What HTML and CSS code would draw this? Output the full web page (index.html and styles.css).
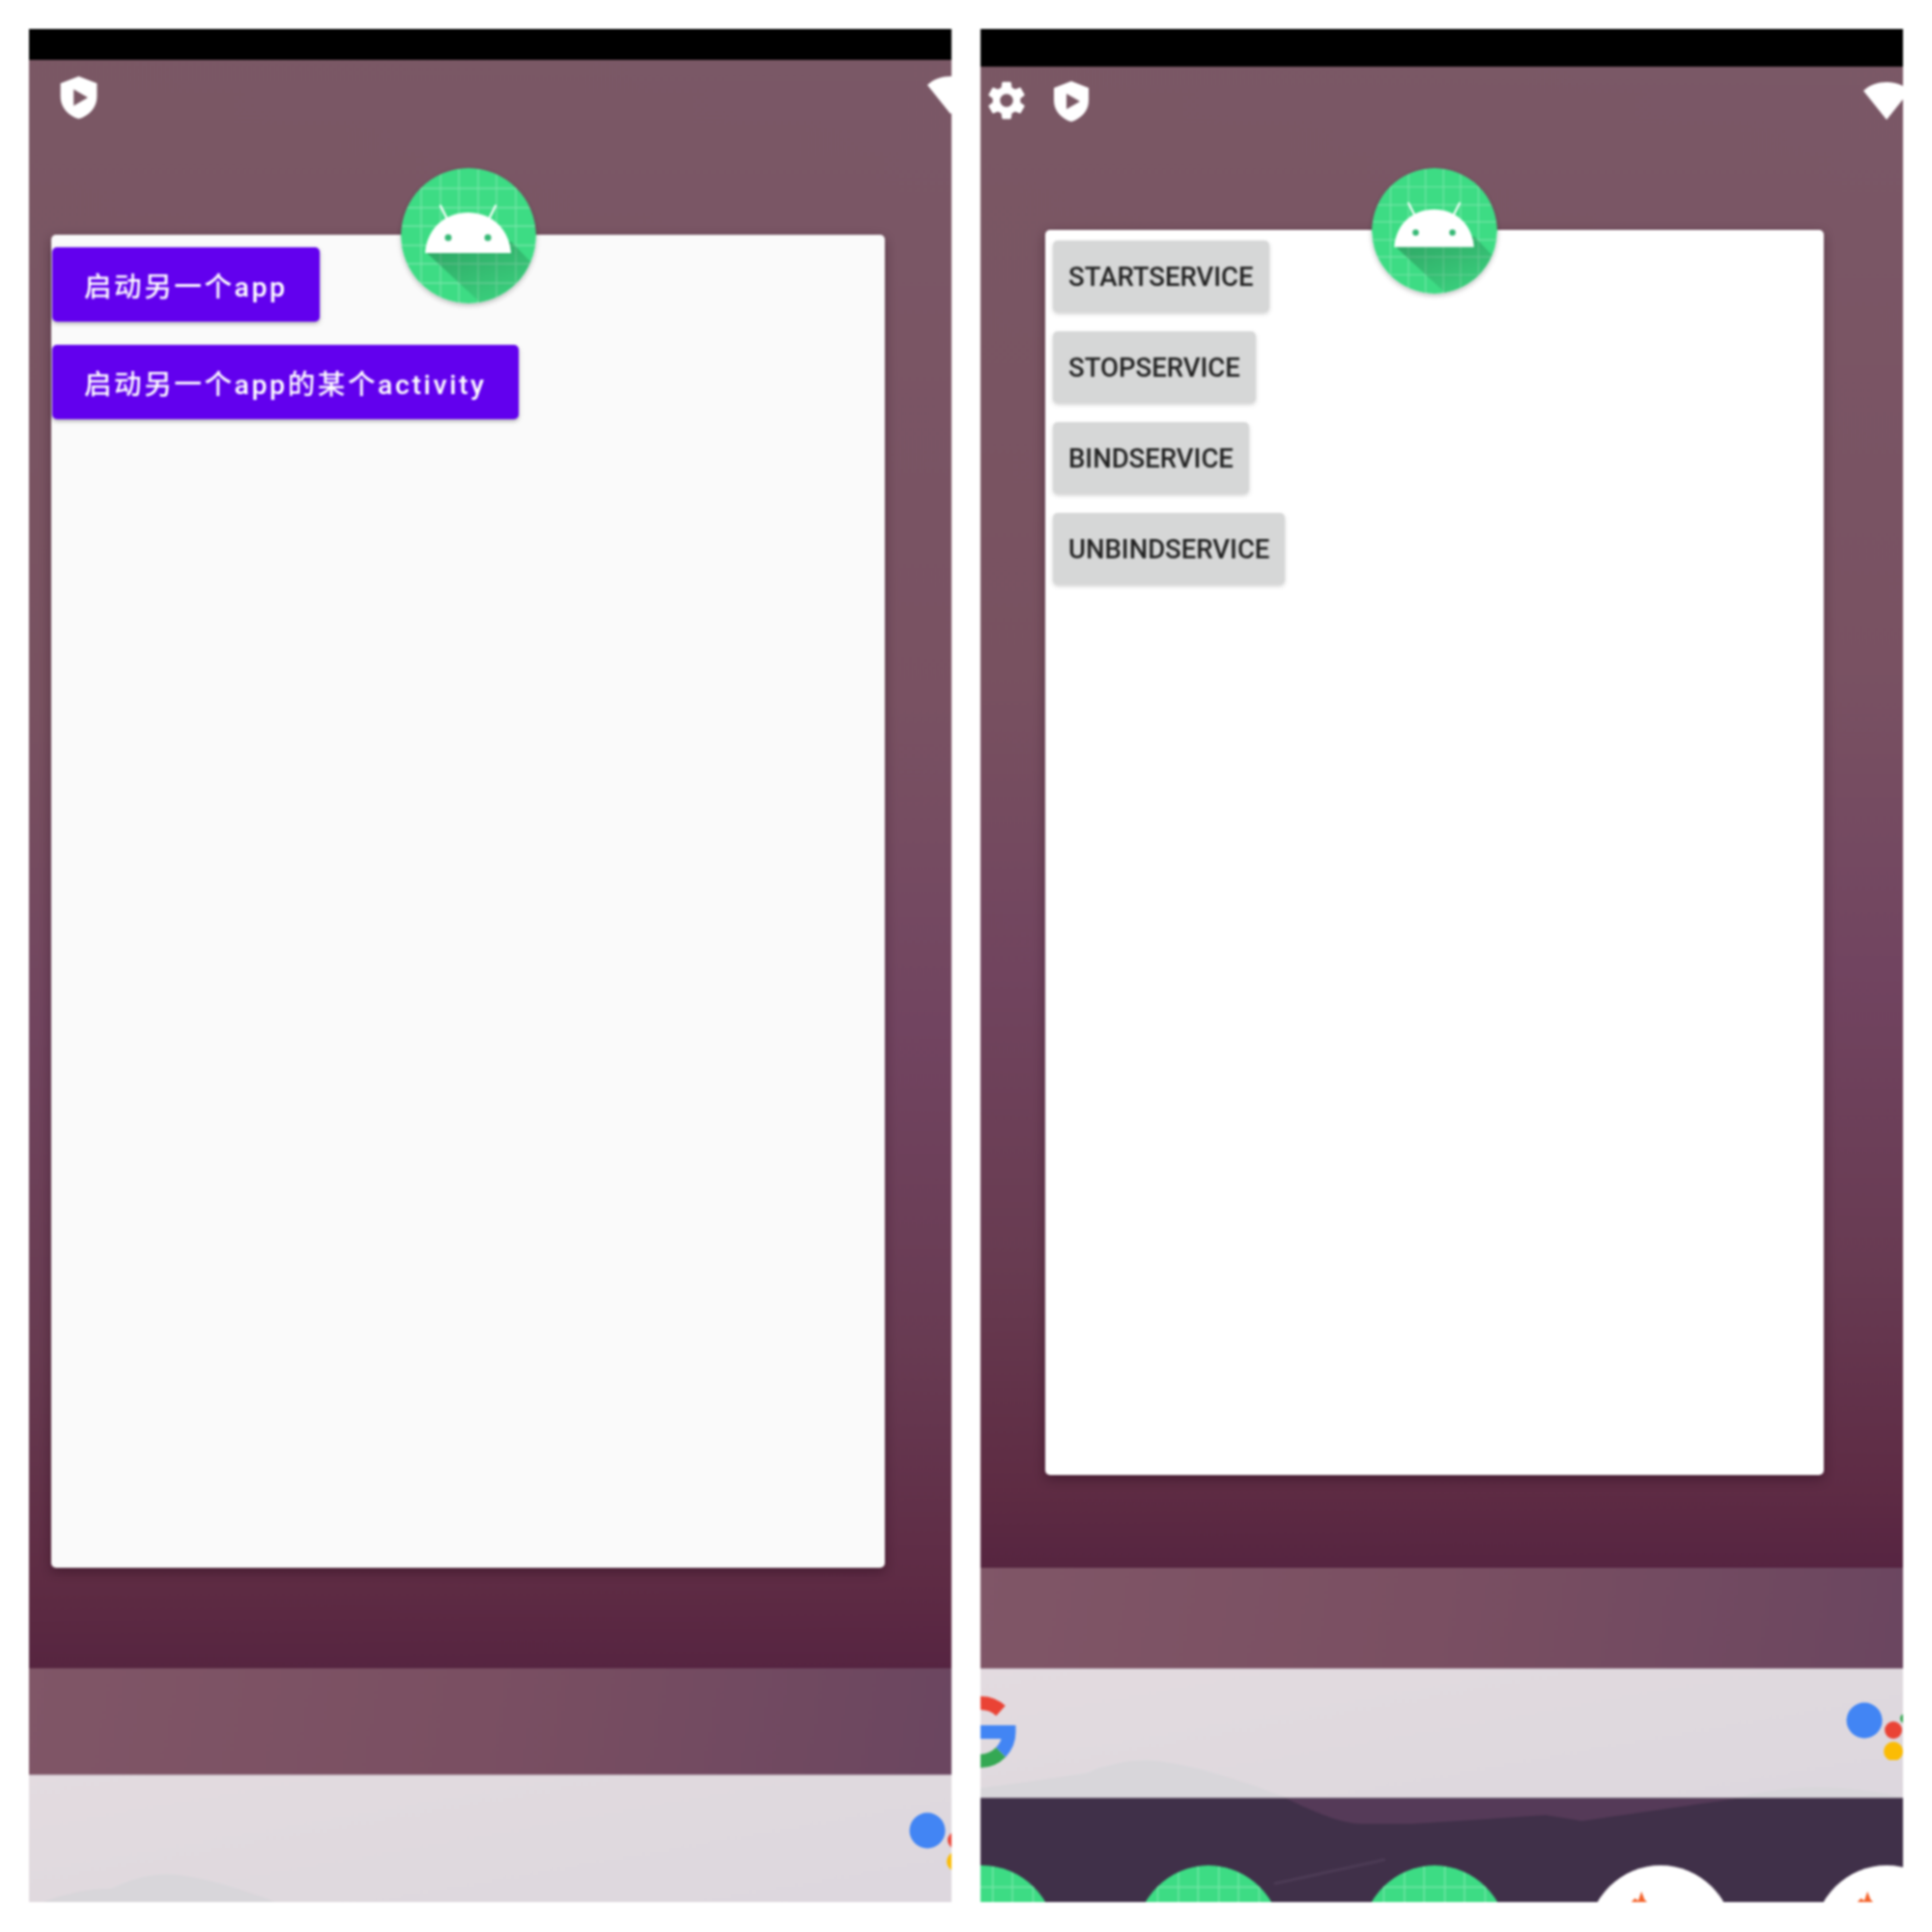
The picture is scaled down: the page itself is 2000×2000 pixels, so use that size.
FILE: index.html
```html
<!DOCTYPE html>
<html lang="zh">
<head>
<meta charset="utf-8">
<title>Android apps</title>
<link rel="stylesheet" href="styles.css">
</head>
<body>
<svg class="defs" aria-hidden="true">
  <defs>
    <clipPath id="disc"><circle cx="70" cy="70" r="70"/></clipPath>
    <linearGradient id="fall" x1="0.2" y1="0" x2="0.8" y2="1">
      <stop offset="0" stop-color="#1c5c3a" stop-opacity=".42"/>
      <stop offset="1" stop-color="#1c5c3a" stop-opacity=".06"/>
    </linearGradient>
    <symbol id="android" viewBox="0 0 140 140">
      <g clip-path="url(#disc)">
        <rect width="140" height="140" fill="#3ddc84"/>
        <path class="grid" d="M21 0V140M41 0V140M60 0V140M80 0V140M99 0V140M119 0V140M0 21H140M0 41H140M0 60H140M0 80H140M0 99H140M0 119H140"/>
        <path d="M27 88L114 76L141 104V141H84Z" fill="url(#fall)"/>
        <path d="M41 39L49 55M98 39L90 55" class="antenna"/>
        <path d="M25 88C27 62 46 46 69.500 46C93 46 112 62 114 88Z" fill="#fff"/>
        <circle cx="49" cy="72" r="3.500" fill="#35b874"/>
        <circle cx="90" cy="72" r="3.500" fill="#35b874"/>
      </g>
    </symbol>
    <symbol id="shield" viewBox="0 0 36 42">
      <path fill-rule="evenodd" d="M18 0L36 7V20C36 31 28 39 18 42C8 39 0 31 0 20V7ZM13 13V29L27 21Z" fill="#fff"/>
    </symbol>
    <symbol id="wifi" viewBox="0 0 48 40">
      <path d="M24 39L0 9C6 3 15 0 24 0C33 0 42 3 48 9Z" fill="#fff"/>
    </symbol>
    <symbol id="dots" viewBox="0 0 64 60">
      <circle cx="19" cy="19" r="18.500" fill="#4285f4"/>
      <circle cx="49" cy="29" r="9" fill="#ea4335"/>
      <circle cx="49" cy="51" r="10" fill="#fbbc04"/>
      <circle cx="61" cy="17" r="5" fill="#34a853"/>
    </symbol>
  </defs>
</svg>

<main class="screens">
  <section class="phone phone-a">
    <div class="status"></div>
    <div class="wall">
      <div class="tray tray-a">
        <svg class="shield"><use href="#shield"/></svg>
        <svg class="wifi wifi-a"><use href="#wifi"/></svg>
      </div>
      <div class="card card-a">
        <svg class="badge badge-a"><use href="#android"/></svg>
        <button class="btn btn-primary">启动另一个app</button>
        <button class="btn btn-primary">启动另一个app的某个activity</button>
      </div>
    </div>
    <div class="band band-a"></div>
    <div class="search search-a">
      <svg class="hills" viewBox="0 0 955 132" preserveAspectRatio="none">
        <path d="M15 132Q50 118 85 118Q115 103 142 103Q180 103 255 132Z"/>
      </svg>
      <svg class="dots dots-a"><use href="#dots"/></svg>
    </div>
  </section>

  <section class="phone phone-b">
    <div class="status status-b"></div>
    <div class="wall">
      <div class="tray tray-b">
        <svg class="gear" viewBox="0 0 24 24"><path fill="#fff" fill-rule="evenodd" d="M19.430 12.980c.040-.320.070-.640.070-.980s-.030-.660-.070-.980l2.110-1.650c.190-.150.240-.420.120-.640l-2-3.460c-.120-.220-.390-.300-.610-.220l-2.490 1c-.520-.400-1.080-.730-1.690-.980l-.380-2.650C14.460 2.180 14.250 2 14 2h-4c-.250 0-.460.180-.490.420l-.380 2.650c-.610.250-1.170.590-1.690.980l-2.490-1c-.230-.090-.490 0-.610.220l-2 3.460c-.130.220-.070.490.120.640l2.110 1.650c-.040.320-.070.650-.070.980s.030.660.070.980l-2.110 1.650c-.190.150-.240.420-.120.640l2 3.460c.120.220.390.300.610.220l2.490-1c.520.400 1.080.730 1.690.980l.380 2.650c.030.240.240.420.490.420h4c.250 0 .460-.180.490-.420l.380-2.650c.610-.250 1.170-.590 1.690-.980l2.490 1c.230.090.490 0 .610-.220l2-3.460c.120-.220.070-.490-.120-.640l-2.110-1.650zM12 15.500c-1.930 0-3.500-1.570-3.500-3.500s1.570-3.500 3.500-3.500 3.500 1.570 3.500 3.500-1.570 3.500-3.500 3.500z"/></svg>
        <svg class="shield shield-b"><use href="#shield"/></svg>
        <svg class="wifi wifi-b"><use href="#wifi"/></svg>
      </div>
      <div class="card card-b">
        <svg class="badge badge-b"><use href="#android"/></svg>
        <button class="btn btn-grey">STARTSERVICE</button>
        <button class="btn btn-grey">STOPSERVICE</button>
        <button class="btn btn-grey">BINDSERVICE</button>
        <button class="btn btn-grey">UNBINDSERVICE</button>
      </div>
    </div>
    <div class="band band-b"></div>
    <div class="search search-b">
      <svg class="hills" viewBox="0 0 955 134" preserveAspectRatio="none">
        <path d="M0 124Q60 116 110 108Q140 95 170 95Q215 95 317 134H782Q820 124 865 123Q920 124 955 134V134H0Z"/>
      </svg>
      <svg class="glogo" viewBox="0 0 74 74">
        <path d="M37 7A30 30 0 0 1 58 15" class="g g-red"/>
        <path d="M0 37H66.500A30 30 0 0 1 58 58" class="g g-blue"/>
        <path d="M58 58A30 30 0 0 1 37 67H0" class="g g-green"/>
        <path d="M0 7H37" class="g g-red"/>
      </svg>
      <svg class="dots dots-b"><use href="#dots"/></svg>
    </div>
    <div class="dock">
      <svg class="ridge" viewBox="0 0 955 107" preserveAspectRatio="none">
        <path class="ridge-fill" d="M317 0Q370 26 393 26H447L585 17L623 23L782 0Z"/>
        <path class="ridge-line" d="M304 88L419 63"/>
      </svg>
      <div class="apps">
        <svg class="app"><use href="#android"/></svg>
        <svg class="app"><use href="#android"/></svg>
        <svg class="app"><use href="#android"/></svg>
        <div class="app app-white"><span class="flame"></span></div>
        <div class="app app-white"><span class="flame"></span></div>
      </div>
    </div>
  </section>
</main>
</body>
</html>
```

FILE: styles.css
```css
* { box-sizing: border-box; }

html, body { margin: 0; background: #fff; }

.defs { position: absolute; width: 0; height: 0; }

.grid { stroke: rgba(255,255,255,.28); stroke-width: 1.3; fill: none; }
.antenna { stroke: #fff; stroke-width: 2.2; stroke-linecap: round; fill: none; }

.screens {
  display: flex;
  gap: 30px;
  padding: 30px;
  width: 2000px;
  height: 2000px;
  font-family: Roboto, "Noto Sans CJK SC", sans-serif;
}

.phone {
  width: 955px;
  height: 1939px;
  display: flex;
  flex-direction: column;
  overflow: hidden;
  filter: blur(.8px);
}

.status { flex: none; height: 32px; background: #000; }
.status-b { height: 39px; }

.wall {
  flex: 1;
  min-height: 0;
  background:
    linear-gradient(100deg, rgba(90,50,60,.08), rgba(90,40,90,.06)),
    linear-gradient(180deg, #7d5b68 0%, #7b5463 40%, #734661 60%, #693c52 80%, #5e2b43 95%, #562440 100%);
}

.tray { display: flex; align-items: flex-start; }
.tray-a { padding: 17px 0 0 32px; height: 61px; }
.tray-b { padding: 15px 0 0 8px; height: 57px; }

.shield { width: 39px; height: 44px; }
.shield-b { width: 36px; height: 42px; margin-left: 30px; }
.gear { width: 46px; height: 46px; margin: -3px -4px 0; }

.wifi { width: 48px; height: 40px; margin-left: auto; }
.wifi-a { margin-right: -23px; }
.wifi-b { margin-top: 1px; margin-right: -7px; }

.card {
  position: relative;
  display: flex;
  flex-direction: column;
  align-items: flex-start;
  border-radius: 5px;
  box-shadow: 0 4px 12px rgba(30,5,20,.4);
}
.card-a {
  margin: 120px 0 0 23px;
  width: 863px;
  height: 1380px;
  padding: 13px 1px;
  gap: 24px;
  background: #fafafa;
}
.card-b {
  margin: 112px 0 0 67px;
  width: 806px;
  height: 1289px;
  padding: 11px 8px;
  gap: 20px;
  background: #fff;
}

.badge {
  position: absolute;
  left: 50%;
  border-radius: 50%;
  box-shadow: 0 2px 5px rgba(0,0,0,.25);
  z-index: 1;
}
.badge-a { width: 140px; height: 140px; top: -69px; margin-left: -70px; }
.badge-b { width: 130px; height: 130px; top: -64px; margin-left: -65px; }

.btn {
  border: 0;
  border-radius: 5px;
  font-family: inherit;
  font-weight: 500;
  white-space: nowrap;
}
.btn-primary {
  height: 77px;
  padding: 0 33px;
  background: #6200ee;
  color: #fff;
  font-size: 28.500px;
  letter-spacing: 2.600px;
  box-shadow: 0 2px 4px rgba(0,0,0,.3);
}
.btn-grey {
  height: 74px;
  padding: 0 16px;
  background: #d6d7d7;
  color: #232323;
  font-size: 27.500px;
  box-shadow: 0 2px 4px rgba(0,0,0,.18);
}

.band { flex: none; background: linear-gradient(100deg, #805667 0%, #7a4f62 50%, #6b4660 100%); }
.band-a { height: 110px; }
.band-b { height: 104px; }

.search {
  position: relative;
  flex: none;
  display: flex;
  align-items: flex-start;
  background: linear-gradient(170deg, #e3dbe0 0%, #dfd9de 60%, #ddd7de 100%);
  border-top: 1px solid #c9bcc6;
}
.search-a { height: 132px; }
.search-b { height: 134px; }

.hills { position: absolute; inset: 0; width: 100%; height: 100%; fill: #d8d6da; }

.dots { position: relative; width: 64px; height: 60px; margin-left: auto; overflow: visible; }
.dots-a { margin-top: 38px; margin-right: -20px; }
.dots-b { margin-top: 34px; margin-right: -5px; }

.glogo {
  position: relative;
  width: 74px;
  height: 74px;
  margin: 28px 0 0 -37px;
  overflow: visible;
}
.g { fill: none; stroke-width: 14; }
.g-red { stroke: #ea4335; }
.g-blue { stroke: #4285f4; }
.g-green { stroke: #34a853; }

.dock {
  position: relative;
  flex: none;
  height: 108px;
  overflow: hidden;
  background: #403049;
  border-top: 1px solid #5d4d62;
}
.ridge { position: absolute; inset: 0; width: 100%; height: 100%; }
.ridge-fill { fill: #553a58; }
.ridge-line { stroke: #4c3b55; stroke-width: 3; fill: none; }

.apps {
  position: relative;
  display: flex;
  gap: 84px;
  margin-left: -73px;
  padding-top: 69px;
}
.app { flex: none; display: block; width: 150px; height: 150px; border-radius: 50%; }
.app-white { position: relative; background: #fff; }
.flame {
  position: absolute;
  left: 42px;
  top: 27px;
  width: 22px;
  height: 14px;
  background: #f4622a;
  clip-path: polygon(0 100%, 30% 50%, 45% 70%, 60% 0, 75% 60%, 100% 100%);
}
```
